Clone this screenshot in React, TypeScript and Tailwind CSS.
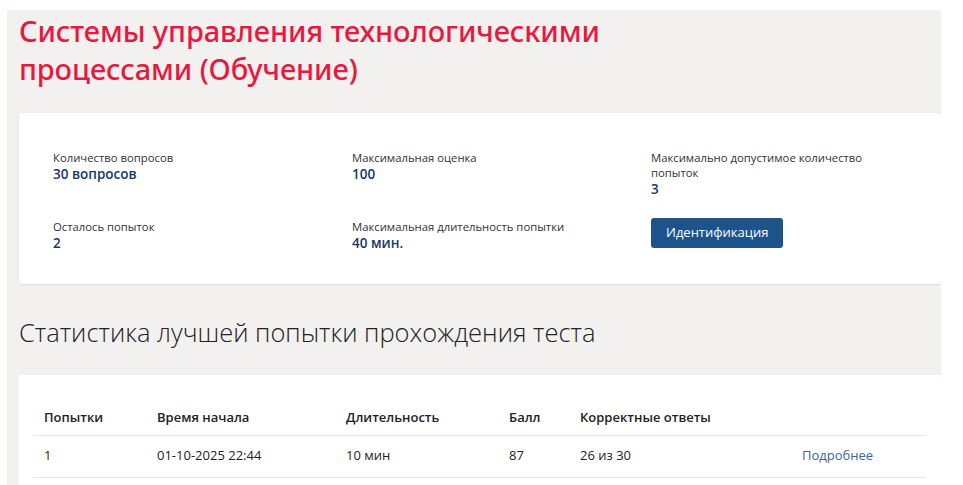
import React from "react";

const body = { fontFamily: '"Open Sans", "Noto Sans", sans-serif' };

const InfoItem = ({ label, value }: { label: string; value: string }) => (
  <div className="leading-[15px]">
    <div className="text-[11.3px] text-[#333]">{label}</div>
    <div className="text-[13.5px] font-semibold text-[#1a3766] leading-[18px]">{value}</div>
  </div>
);

export default function App() {
  const rows = [
    { n: "1", start: "01-10-2025 22:44", dur: "10 мин", score: "87", correct: "26 из 30" },
  ];

  return (
    <div className="min-h-screen bg-white pt-[10px] pl-[7px]" style={body}>
      <div className="w-[934px] h-[475px] bg-[#f2f1f0] overflow-hidden pl-[12px]">
        {/* Title */}
        <h1
          className="pt-[2px] text-[29px] font-medium leading-[38px] text-[#e8193f] w-[640px] tracking-[-0.1px]"
          style={{ fontFamily: '"Noto Sans", sans-serif' }}
        >
          Системы управления технологическими процессами (Обучение)
        </h1>

        {/* Info card */}
        <section className="mt-[25px] bg-white rounded-[4px] shadow-[0_1px_2px_rgba(0,0,0,0.08)] h-[171px] pl-[34px] pt-[37px]">
          <div className="grid grid-cols-[299px_299px_230px] gap-y-[21px]">
            <InfoItem label="Количество вопросов" value="30 вопросов" />
            <InfoItem label="Максимальная оценка" value="100" />
            <InfoItem label="Максимально допустимое количество попыток" value="3" />
            <InfoItem label="Осталось попыток" value="2" />
            <InfoItem label="Максимальная длительность попытки" value="40 мин." />
            <div className="-mt-[1px]">
              <button className="h-[30px] px-[15px] rounded-[3px] bg-[#1c538b] text-white text-[13px] font-medium">
                Идентификация
              </button>
            </div>
          </div>
        </section>

        {/* Stats heading */}
        <h2 className="mt-[31px] text-[25.5px] font-light text-[#222] leading-[34px]">
          Статистика лучшей попытки прохождения теста
        </h2>

        {/* Table card */}
        <section className="mt-[26px] bg-white rounded-[4px] pt-[26px] px-[14px] h-[120px]">
          <table className="w-[893px] text-[13px] text-[#222] border-collapse">
            <thead>
              <tr className="border-b border-[#e4e4e4] h-[34px]">
                <th className="text-left font-semibold pl-[11px] w-[124px]">Попытки</th>
                <th className="text-left font-semibold w-[189px]">Время начала</th>
                <th className="text-left font-semibold w-[163px]">Длительность</th>
                <th className="text-left font-semibold w-[71px]">Балл</th>
                <th className="text-left font-semibold w-[222px]">Корректные ответы</th>
                <th></th>
              </tr>
            </thead>
            <tbody>
              {rows.map((r) => (
                <tr key={r.n} className="border-b border-[#e4e4e4] h-[42px]">
                  <td className="pl-[11px]">{r.n}</td>
                  <td>{r.start}</td>
                  <td>{r.dur}</td>
                  <td>{r.score}</td>
                  <td>{r.correct}</td>
                  <td>
                    <a href="#" className="text-[#3567a3]">Подробнее</a>
                  </td>
                </tr>
              ))}
            </tbody>
          </table>
        </section>
      </div>
    </div>
  );
}
